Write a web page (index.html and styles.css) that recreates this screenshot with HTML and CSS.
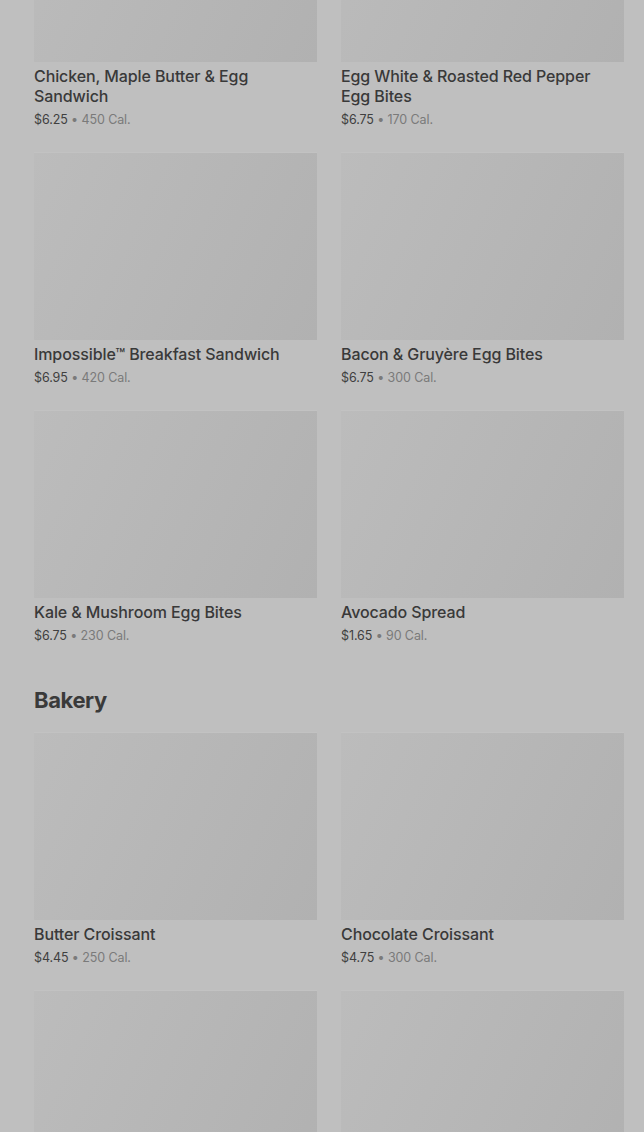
FILE: index.html
```html
<!DOCTYPE html>
<html>
<head>
<meta charset="utf-8">
<link rel="stylesheet" href="styles.css">
</head>
<body>
<main class="menu">
  <section class="section">
    <div class="grid">
      <div class="card"><div class="thumb"></div><div class="name">Chicken, Maple Butter &amp; Egg Sandwich</div><div class="meta"><span class="price">$6.25</span> • 450 Cal.</div></div>
      <div class="card"><div class="thumb"></div><div class="name">Egg White &amp; Roasted Red Pepper Egg Bites</div><div class="meta"><span class="price">$6.75</span> • 170 Cal.</div></div>
      <div class="card"><div class="thumb"></div><div class="name">Impossible™ Breakfast Sandwich</div><div class="meta"><span class="price">$6.95</span> • 420 Cal.</div></div>
      <div class="card"><div class="thumb"></div><div class="name">Bacon &amp; Gruyère Egg Bites</div><div class="meta"><span class="price">$6.75</span> • 300 Cal.</div></div>
      <div class="card"><div class="thumb"></div><div class="name">Kale &amp; Mushroom Egg Bites</div><div class="meta"><span class="price">$6.75</span> • 230 Cal.</div></div>
      <div class="card"><div class="thumb"></div><div class="name">Avocado Spread</div><div class="meta"><span class="price">$1.65</span> • 90 Cal.</div></div>
    </div>
  </section>
  <section class="section">
    <h2 class="heading">Bakery</h2>
    <div class="grid">
      <div class="card"><div class="thumb"></div><div class="name">Butter Croissant</div><div class="meta"><span class="price">$4.45</span> • 250 Cal.</div></div>
      <div class="card"><div class="thumb"></div><div class="name">Chocolate Croissant</div><div class="meta"><span class="price">$4.75</span> • 300 Cal.</div></div>
      <div class="card"><div class="thumb"></div><div class="name">&nbsp;</div><div class="meta">&nbsp;</div></div>
      <div class="card"><div class="thumb"></div><div class="name">&nbsp;</div><div class="meta">&nbsp;</div></div>
    </div>
  </section>
</main>
</body>
</html>
```
FILE: styles.css
```css
html, body {
  margin: 0;
  padding: 0;
  background: #bfbfbf;
  overflow: hidden;
}
body {
  font-family: Inter, Roboto, "Liberation Sans", sans-serif;
  height: 1132px;
}
.menu {
  margin-top: -126px;
  padding: 0 20px 0 34px;
}
.grid {
  display: grid;
  grid-template-columns: 283px 283px;
  column-gap: 24px;
}
.card {
  padding-bottom: 22px;
}
.thumb {
  height: 188px;
  background: linear-gradient(115deg, #bcbcbc 0%, #b7b7b7 45%, #b1b1b1 100%);
  border-top: 1px solid #c2c2c2;
  box-sizing: border-box;
}
.name {
  margin-top: 4px;
  padding-right: 16px;
  font-size: 16px;
  line-height: 20px;
  font-weight: 500;
  color: #393939;
  letter-spacing: -0.1px;
}
.meta {
  margin-top: 4px;
  font-size: 12.5px;
  line-height: 20px;
  color: #7a7a7a;
  letter-spacing: -0.1px;
}
.price {
  color: #404040;
}
.heading {
  margin: 17px 0 17px;
  font-size: 22px;
  line-height: 30px;
  font-weight: 700;
  color: #3a3a3a;
  letter-spacing: -0.4px;
}
```
